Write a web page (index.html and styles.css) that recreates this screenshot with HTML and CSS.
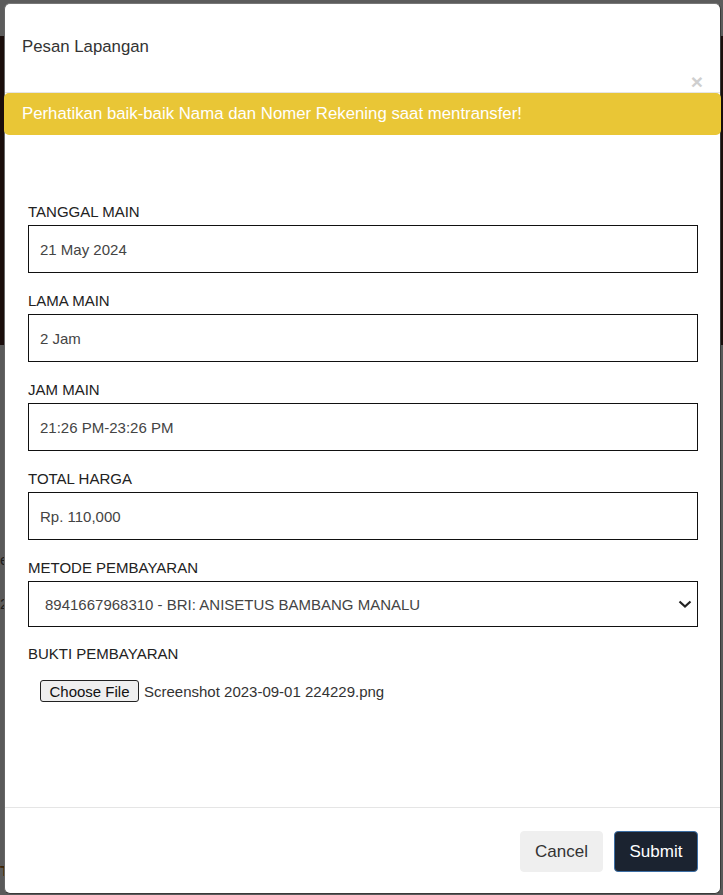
FILE: index.html
```html
<!DOCTYPE html>
<html lang="id">
<head>
<meta charset="utf-8">
<title>Pesan Lapangan</title>
<link rel="stylesheet" href="styles.css">
</head>
<body>
<div class="page">
  <div class="page-top"></div>
  <div class="page-hero"></div>
  <div class="page-rest">
    <span class="frag frag-e">e</span>
    <span class="frag frag-2">2</span>
    <span class="frag frag-t">T</span>
  </div>
</div>

<div class="modal">
  <div class="modal-header">
    <h4 class="modal-title">Pesan Lapangan</h4>
    <button class="close" type="button">&times;</button>
  </div>
  <div class="alert">Perhatikan baik-baik Nama dan Nomer Rekening saat mentransfer!</div>
  <form class="modal-body">
    <div class="group">
      <label class="label">TANGGAL MAIN</label>
      <div class="field">21 May 2024</div>
    </div>
    <div class="group">
      <label class="label">LAMA MAIN</label>
      <div class="field">2 Jam</div>
    </div>
    <div class="group">
      <label class="label">JAM MAIN</label>
      <div class="field">21:26 PM-23:26 PM</div>
    </div>
    <div class="group">
      <label class="label">TOTAL HARGA</label>
      <div class="field">Rp. 110,000</div>
    </div>
    <div class="group group-select">
      <label class="label">METODE PEMBAYARAN</label>
      <div class="select">
        <span>8941667968310 - BRI: ANISETUS BAMBANG MANALU</span>
        <svg class="chev" width="14" height="10" viewBox="0 0 14 10"><path d="M1.5 2.5 L7 7.5 L12.5 2.5" fill="none" stroke="#222" stroke-width="2.2"/></svg>
      </div>
    </div>
    <div class="group">
      <label class="label">BUKTI PEMBAYARAN</label>
      <div class="file">
        <span class="file-btn">Choose File</span>
        <span class="file-name">Screenshot 2023-09-01 224229.png</span>
      </div>
    </div>
  </form>
  <div class="modal-footer">
    <button class="btn btn-cancel" type="button">Cancel</button>
    <button class="btn btn-submit" type="button">Submit</button>
  </div>
</div>
</body>
</html>
```
FILE: styles.css
```css
html, body {
  margin: 0;
  padding: 0;
}
body {
  width: 723px;
  height: 895px;
  overflow: hidden;
  background: #5a5a5a;
  font-family: "Liberation Sans", Arial, sans-serif;
  position: relative;
}
.page {
  display: flex;
  flex-direction: column;
  height: 895px;
}
.page-top {
  height: 36px;
  background: #5c5c5c;
}
.page-hero {
  height: 309px;
  background: #1a0d0b;
}
.page-rest {
  flex: 1;
  background: #5a5a5a;
  position: relative;
}
.frag {
  position: absolute;
  left: 0;
  font-size: 15px;
  color: #1c1c1c;
}
.frag-e { top: 206px; }
.frag-2 { top: 250px; }
.frag-t { top: 517px; color: #3a2206; font-weight: bold; }

.modal {
  position: absolute;
  left: 4px;
  top: 3px;
  width: 717px;
  height: 891px;
  box-sizing: border-box;
  background: #fff;
  border: 1px solid #3a3a3a;
  border-top-color: #777;
  border-left-color: #666;
  border-radius: 6px;
  display: flex;
  flex-direction: column;
}
.modal-header {
  display: flex;
  flex-direction: column;
  height: 89px;
  box-sizing: border-box;
  padding: 33px 18px 0 17px;
  border-bottom: 1px solid #e5e5e5;
}
.modal-title {
  margin: 0;
  font-size: 16.8px;
  font-weight: normal;
  line-height: 20px;
  color: #333;
}
.close {
  align-self: flex-end;
  margin: 15px -1px 0 0;
  padding: 0;
  border: 0;
  background: none;
  font-family: "Liberation Sans", Arial, sans-serif;
  font-size: 21px;
  font-weight: bold;
  line-height: 19px;
  color: #cfcfcf;
}
.alert {
  margin: 0 -1px;
  height: 42px;
  line-height: 42px;
  padding: 0 18px;
  background: #e9c636;
  color: #fff;
  font-size: 16.8px;
  border-radius: 5px;
}
.modal-body {
  flex: 1;
  margin: 0;
  padding: 68px 22px 0 23px;
  display: flex;
  flex-direction: column;
}
.group {
  display: flex;
  flex-direction: column;
  margin-bottom: 19px;
}
.group-select { margin-bottom: 18px; }
.label {
  font-size: 15px;
  line-height: 18px;
  color: #222;
  margin-bottom: 4px;
}
.field {
  height: 48px;
  box-sizing: border-box;
  border: 1px solid #111;
  padding: 0 11px;
  display: flex;
  align-items: center;
  font-size: 15px;
  color: #444;
}
.select {
  height: 46px;
  box-sizing: border-box;
  border: 1px solid #111;
  padding: 0 5px 0 16px;
  display: flex;
  align-items: center;
  justify-content: space-between;
  font-size: 15px;
  color: #444;
}
.chev { display: block; }
.file {
  display: flex;
  align-items: center;
  margin-top: 13px;
  padding-left: 12px;
  gap: 5px;
}
.file-btn {
  height: 22px;
  box-sizing: border-box;
  width: 99px;
  border: 1px solid #222;
  border-radius: 3px;
  background: #efefef;
  font-size: 15px;
  color: #111;
  display: flex;
  align-items: center;
  justify-content: center;
}
.file-name {
  font-size: 15px;
  color: #333;
}
.modal-footer {
  border-top: 1px solid #e5e5e5;
  padding: 23px 22px 21px;
  display: flex;
  justify-content: flex-end;
  gap: 11px;
}
.btn {
  height: 41px;
  box-sizing: border-box;
  border-radius: 4px;
  font-family: "Liberation Sans", Arial, sans-serif;
  font-size: 17px;
  padding: 0;
}
.btn-cancel {
  width: 83px;
  background: #efefef;
  border: 1px solid #efefef;
  color: #333;
}
.btn-submit {
  width: 84px;
  background: #1b2330;
  border: 1px solid #3c6ea4;
  color: #fff;
}
```
